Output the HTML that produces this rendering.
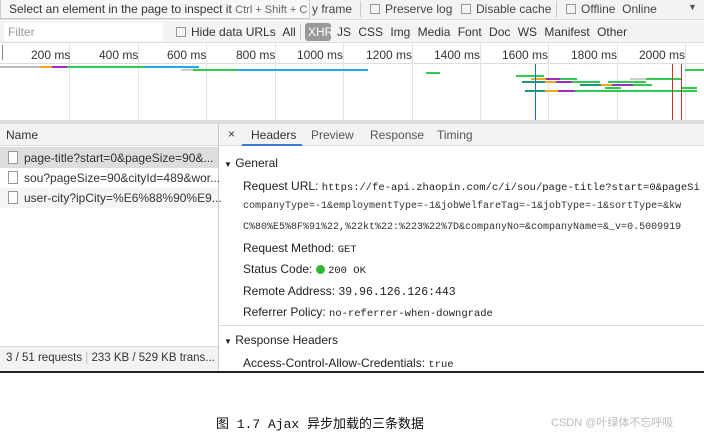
<!DOCTYPE html><html><head><meta charset="utf-8"><style>
*{margin:0;padding:0;box-sizing:border-box}
body{width:704px;height:434px;background:#fff;position:relative;overflow:hidden;font-family:"Liberation Sans","Noto Sans CJK SC",sans-serif;font-size:12px;color:#333}
.a{position:absolute;white-space:nowrap}
.cb{display:inline-block;width:10px;height:10px;border:1px solid #999;background:#f4f4f4;vertical-align:-1px;margin-right:5px}
.g{position:absolute;top:44px;height:76px;width:1px;background:#e4e4e4}
.t{position:absolute;top:48px;font-size:12px;color:#333}
.b{position:absolute;height:2px}
.m{font-family:"Liberation Mono",monospace;font-size:10.5px}
.l{color:#222}
</style></head><body>
<div class="a" style="left:0;top:0;width:704px;height:20px;background:#f3f3f3;border-bottom:1px solid #ddd"></div>
<div class="a" style="left:0;top:0;width:310px;height:19px;background:#f7f7f7;border:1px solid #ccc;border-top:none;padding:2px 8px;color:#333">Select an element in the page to inspect it <span style="color:#666;font-size:11px">Ctrl + Shift + C</span></div>
<div class="a" style="left:312px;top:2px;color:#444">y frame</div>
<div class="a" style="left:360px;top:1px;width:1px;height:16px;background:#ccc"></div>
<div class="a" style="left:370px;top:2px;color:#444"><span class="cb"></span>Preserve log</div>
<div class="a" style="left:461px;top:2px;color:#444"><span class="cb"></span>Disable cache</div>
<div class="a" style="left:556px;top:1px;width:1px;height:16px;background:#ccc"></div>
<div class="a" style="left:566px;top:2px;color:#444"><span class="cb"></span>Offline &nbsp;Online</div>
<div class="a" style="left:688px;top:2px;font-size:9px;color:#555">▼</div>
<div class="a" style="left:0;top:21px;width:704px;height:22px;background:#f3f3f3;border-bottom:1px solid #ddd"></div>
<div class="a" style="left:4px;top:23px;width:159px;height:18px;background:#fff;padding:2px 4px;color:#999">Filter</div>
<div class="a" style="left:176px;top:25px;color:#333"><span class="cb"></span>Hide data URLs &nbsp;All</div>
<div class="a" style="left:300px;top:24px;width:1px;height:16px;background:#ccc"></div>
<div class="a" style="left:305px;top:23px;width:26px;height:18px;background:#999;border-radius:3px;color:#fff;padding:2px 3px">XHR</div>
<div class="a" style="left:337px;top:25px;color:#333;word-spacing:4px">JS CSS Img Media Font Doc WS Manifest Other</div>
<div class="a" style="left:0;top:44px;width:704px;height:78px;background:#fff"></div>
<div class="a" style="left:2px;top:45px;width:1px;height:15px;background:#888"></div>
<div class="a" style="left:0;top:63px;width:704px;height:1px;background:#ddd"></div>
<div class="g" style="left:69px"></div><div class="g" style="left:138px"></div><div class="g" style="left:206px"></div><div class="g" style="left:275px"></div><div class="g" style="left:343px"></div><div class="g" style="left:412px"></div><div class="g" style="left:480px"></div><div class="g" style="left:548px"></div><div class="g" style="left:617px"></div><div class="g" style="left:685px"></div>
<div class="t" style="left:31px">200 ms</div><div class="t" style="left:99px">400 ms</div><div class="t" style="left:167px">600 ms</div><div class="t" style="left:236px">800 ms</div><div class="t" style="left:297px">1000 ms</div><div class="t" style="left:366px">1200 ms</div><div class="t" style="left:434px">1400 ms</div><div class="t" style="left:502px">1600 ms</div><div class="t" style="left:571px">1800 ms</div><div class="t" style="left:639px">2000 ms</div>
<div class="b" style="left:0;top:66px;width:40px;background:#bbb"></div>
<div class="b" style="left:40px;top:66px;width:12px;background:#f5a623"></div>
<div class="b" style="left:52px;top:66px;width:15px;background:#9b30c0"></div>
<div class="b" style="left:67px;top:66px;width:78px;background:#2ecc50"></div>
<div class="b" style="left:145px;top:66px;width:54px;background:#22aaee"></div>
<div class="b" style="left:181px;top:69px;width:12px;background:#ccc"></div>
<div class="b" style="left:193px;top:69px;width:45px;background:#2ecc50"></div>
<div class="b" style="left:238px;top:69px;width:130px;background:#22aaee"></div>
<div class="b" style="left:426px;top:72px;width:14px;background:#2ecc50"></div>
<div class="b" style="left:685px;top:69px;width:19px;background:#2ecc50"></div>
<div class="b" style="left:516px;top:75px;width:28px;background:#2ecc50"></div>
<div class="b" style="left:531px;top:78px;width:15px;background:#f5a623"></div>
<div class="b" style="left:546px;top:78px;width:14px;background:#9b30c0"></div>
<div class="b" style="left:560px;top:78px;width:17px;background:#2ecc50"></div>
<div class="b" style="left:630px;top:78px;width:16px;background:#ccc"></div>
<div class="b" style="left:646px;top:78px;width:35px;background:#2ecc50"></div>
<div class="b" style="left:522px;top:81px;width:23px;background:#1a9a7a"></div>
<div class="b" style="left:545px;top:81px;width:11px;background:#f5a623"></div>
<div class="b" style="left:556px;top:81px;width:16px;background:#9b30c0"></div>
<div class="b" style="left:572px;top:81px;width:28px;background:#2ecc50"></div>
<div class="b" style="left:608px;top:81px;width:38px;background:#2ecc50"></div>
<div class="b" style="left:580px;top:84px;width:21px;background:#1a9a7a"></div>
<div class="b" style="left:601px;top:84px;width:11px;background:#f5a623"></div>
<div class="b" style="left:612px;top:84px;width:21px;background:#9b30c0"></div>
<div class="b" style="left:633px;top:84px;width:19px;background:#2ecc50"></div>
<div class="b" style="left:605px;top:87px;width:16px;background:#2ecc50"></div>
<div class="b" style="left:682px;top:87px;width:15px;background:#2ecc50"></div>
<div class="b" style="left:525px;top:90px;width:20px;background:#1a9a7a"></div>
<div class="b" style="left:545px;top:90px;width:13px;background:#f5a623"></div>
<div class="b" style="left:558px;top:90px;width:17px;background:#9b30c0"></div>
<div class="b" style="left:575px;top:90px;width:122px;background:#2ecc50"></div>
<div class="a" style="left:535px;top:64px;width:1px;height:57px;background:#1a6fd0"></div>
<div class="a" style="left:672px;top:64px;width:1px;height:57px;background:#c0392b"></div>
<div class="a" style="left:681px;top:64px;width:1px;height:57px;background:#c0392b"></div>
<div class="a" style="left:0;top:120px;width:704px;height:4px;background:#ddd"></div>
<div class="a" style="left:0;top:124px;width:218px;height:22px;background:#f3f3f3;border-bottom:1px solid #ddd;padding:4px 6px">Name</div>
<div class="a" style="left:218px;top:124px;width:1px;height:247px;background:#ccc"></div>
<div class="a" style="left:0;top:147px;width:218px;height:21px;background:#ddd"></div>
<div class="a" style="left:0;top:188px;width:218px;height:20px;background:#f5f5f5"></div>
<div class="a" style="left:8px;top:151px;width:10px;height:13px;border:1px solid #999;background:#fff"></div>
<div class="a" style="left:8px;top:171px;width:10px;height:13px;border:1px solid #999;background:#fff"></div>
<div class="a" style="left:8px;top:191px;width:10px;height:13px;border:1px solid #999;background:#fff"></div>
<div class="a" style="left:24px;top:151px">page-title?start=0&amp;pageSize=90&amp;...</div>
<div class="a" style="left:24px;top:171px">sou?pageSize=90&amp;cityId=489&amp;wor...</div>
<div class="a" style="left:24px;top:191px">user-city?ipCity=%E6%88%90%E9...</div>
<div class="a" style="left:0;top:346px;width:218px;height:25px;background:#f3f3f3;border-top:1px solid #ddd;padding:5px 6px;font-size:11.5px;color:#333">3 / 51 requests <span style="color:#bbb">|</span> 233 KB / 529 KB trans...</div>
<div class="a" style="left:219px;top:124px;width:485px;height:22px;background:#f3f3f3;border-bottom:1px solid #ddd"></div>
<div class="a" style="left:228px;top:127px;color:#333">×</div>
<div class="a" style="left:251px;top:128px;color:#333">Headers</div>
<div class="a" style="left:242px;top:144px;width:60px;height:2px;background:#3879d9"></div>
<div class="a" style="left:311px;top:128px;color:#555">Preview</div>
<div class="a" style="left:370px;top:128px;color:#555">Response</div>
<div class="a" style="left:437px;top:128px;color:#555">Timing</div>
<div class="a l" style="left:224px;top:156px"><span style="font-size:8px">▼</span> General</div>
<div class="a l" style="left:243px;top:179px">Request URL: <span class="m">https://fe-api.zhaopin.com/c/i/sou/page-title?start=0&amp;pageSi</span></div>
<div class="a m" style="left:243px;top:201px;font-size:10px">companyType=-1&amp;employmentType=-1&amp;jobWelfareTag=-1&amp;jobType=-1&amp;sortType=&amp;kw</div>
<div class="a m" style="left:243px;top:222px;font-size:10px">C%80%E5%8F%91%22,%22kt%22:%223%22%7D&amp;companyNo=&amp;companyName=&amp;_v=0.5009919</div>
<div class="a l" style="left:243px;top:241px">Request Method: <span class="m">GET</span></div>
<div class="a l" style="left:243px;top:262px">Status Code: <span style="display:inline-block;width:9px;height:9px;border-radius:50%;background:#2db82d;vertical-align:-1px"></span> <span class="m">200 OK</span></div>
<div class="a l" style="left:243px;top:284px">Remote Address: <span class="m" style="font-size:11.5px">39.96.126.126:443</span></div>
<div class="a l" style="left:243px;top:305px">Referrer Policy: <span class="m">no-referrer-when-downgrade</span></div>
<div class="a" style="left:219px;top:325px;width:485px;height:1px;background:#ddd"></div>
<div class="a l" style="left:224px;top:333px"><span style="font-size:8px">▼</span> Response Headers</div>
<div class="a l" style="left:243px;top:356px">Access-Control-Allow-Credentials: <span class="m">true</span></div>
<div class="a" style="left:0;top:371px;width:704px;height:2px;background:#222"></div>
<div class="a" style="left:216px;top:413px;font-size:13px;color:#111;font-family:'Liberation Mono','Noto Sans CJK SC',monospace">图 1.7 Ajax 异步加载的三条数据</div>
<div class="a" style="left:551px;top:414px;font-size:11px;color:#bbb">CSDN @叶绿体不忘呼吸</div>
</body></html>
